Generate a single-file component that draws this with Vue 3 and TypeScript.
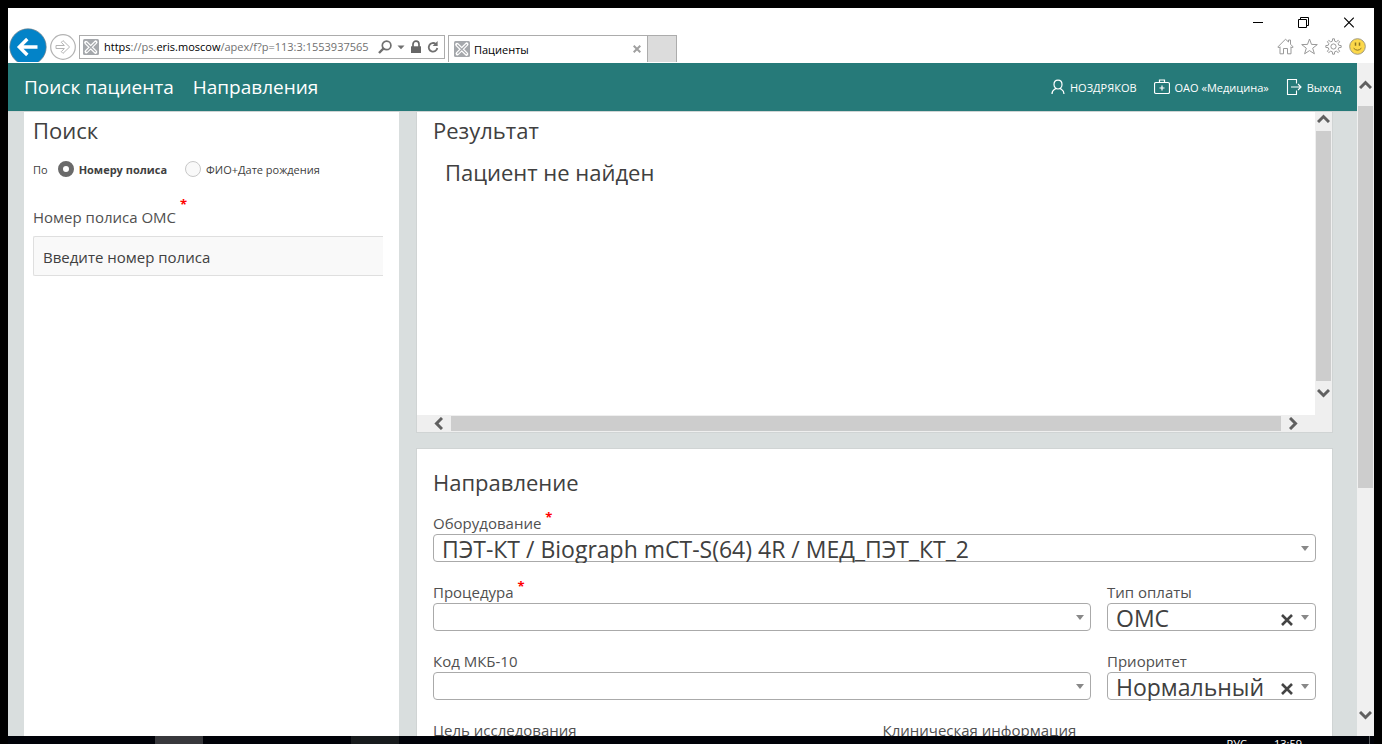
<script setup lang="ts">
import { ref } from 'vue'

type SearchMode = 'policy' | 'name'

const url = ref('https://ps.eris.moscow/apex/f?p=113:3:1553937565')
const mode = ref<SearchMode>('policy')
const policy = ref('')
const equipment = ref('ПЭТ-КТ / Biograph mCT-S(64) 4R / МЕД_ПЭТ_КТ_2')
const procedure = ref('')
const icd = ref('')
const payment = ref('ОМС')
const priority = ref('Нормальный')
</script>

<template>
  <div class="screen">
    <div class="window">
      <header class="chrome">
        <div class="nav-tools">
          <button class="back" type="button" aria-label="Назад">
            <svg width="38" height="38" viewBox="0 0 38 38">
              <circle cx="19" cy="19" r="18.2" fill="#0383c8" stroke="#6f7f8a" stroke-width=".7" />
              <path d="M28.5 19H11M18.3 11 L10.3 19l8 8" fill="none" stroke="#fff" stroke-width="3.4" />
            </svg>
          </button>
          <button class="forward" type="button" aria-label="Вперёд">
            <svg width="26" height="26" viewBox="0 0 26 26" fill="none" stroke="#b3b3b3">
              <circle cx="13" cy="13" r="12.3" stroke-width="1.2" />
              <path d="M6 11.5h8.3l-3-3.2 1.7-1.7 6.6 6.4-6.6 6.4-1.7-1.7 3-3.2H6z" />
            </svg>
          </button>
          <div class="address">
            <svg class="fav" width="16" height="16" viewBox="0 0 16 16">
              <rect width="16" height="16" rx="1.5" fill="#a5a8ac" />
              <path d="M3 3.6 12.5 13M12.7 3.2 3.4 12.6" stroke="#fff" stroke-width="3.6" stroke-linecap="round" />
              <path d="M3.4 4 12.2 12.6M12.4 3.6 3.8 12.2" stroke="#a5a8ac" stroke-width="1.3" stroke-linecap="round" />
            </svg>
            <label class="url">
              <span class="url-text" aria-hidden="true"><b>https</b>://ps.<b>eris.moscow</b>/apex/f?p=113:3:1553937565</span>
              <input v-model="url" type="text" aria-label="Адрес" />
            </label>
            <button type="button" aria-label="Поиск">
              <svg width="14" height="14" viewBox="0 0 14 14" fill="none" stroke="#707070"><circle cx="8.6" cy="5.4" r="4.3" stroke-width="1.7" /><path d="M5.6 8.4 1 13" stroke-width="2.4" /></svg>
            </button>
            <button type="button" aria-label="Показать адреса">
              <svg width="8" height="5" viewBox="0 0 8 5"><path d="M.5.5h7L4 4.3z" fill="#707070" /></svg>
            </button>
            <svg width="12" height="14" viewBox="0 0 12 14"><path d="M3 7V4.2a3 3 0 0 1 6 0V7" fill="none" stroke="#666" stroke-width="1.7" /><path d="M1 6.3h10V13H1z" fill="#666" /></svg>
            <button type="button" aria-label="Обновить">
              <svg width="12" height="14" viewBox="0 0 12 14"><path d="M8.8 4A4.3 4.3 0 1 0 10.300 8" fill="none" stroke="#707070" stroke-width="1.8" /><path d="M10.600 1v5H5.600z" fill="#707070" /></svg>
            </button>
          </div>
        </div>
        <div class="tabs">
          <div class="tab">
            <svg class="fav" width="16" height="16" viewBox="0 0 16 16">
              <rect width="16" height="16" rx="1.5" fill="#a5a8ac" />
              <path d="M3 3.6 12.5 13M12.7 3.2 3.4 12.6" stroke="#fff" stroke-width="3.6" stroke-linecap="round" />
              <path d="M3.4 4 12.2 12.6M12.4 3.6 3.8 12.2" stroke="#a5a8ac" stroke-width="1.3" stroke-linecap="round" />
            </svg>
            <span>Пациенты</span>
            <button type="button" aria-label="Закрыть вкладку">
              <svg width="8" height="8" viewBox="0 0 8 8"><path d="M.7.7l6.6 6.6M7.3.7.7 7.3" stroke="#a0a0a0" stroke-width="2" /></svg>
            </button>
          </div>
          <button class="new-tab" type="button" aria-label="Новая вкладка"></button>
        </div>
        <div class="window-tools">
          <div class="caption">
            <button type="button" aria-label="Свернуть">
              <svg width="10" height="11" viewBox="0 0 10 11"><path d="M0 5.5h10" stroke="#000" /></svg>
            </button>
            <button type="button" aria-label="Восстановить">
              <svg width="11" height="11" viewBox="0 0 11 11" fill="none" stroke="#000"><path d="M.5 2.5h8v8h-8zM2.5 2.5v-2h8v8h-2" /></svg>
            </button>
            <button type="button" aria-label="Закрыть">
              <svg width="10" height="11" viewBox="0 0 10 11"><path d="M.2.7l9.6 9.6M9.8.7.2 10.3" stroke="#000" stroke-width="1.1" /></svg>
            </button>
          </div>
          <div class="actions">
            <button type="button" aria-label="Домашняя страница">
              <svg width="17" height="17" viewBox="0 0 17 17" fill="none" stroke="#999"><path d="M.8 9 8.5 1.2 11.5 4V2h2v4.2L16.2 9l-1 1-1.2-1.2v7h-3.5V10.5h-4v5.3H3V8.8L1.8 10z" /></svg>
            </button>
            <button type="button" aria-label="Избранное">
              <svg width="17" height="17" viewBox="0 0 17 17" fill="none" stroke="#999"><path d="M8.5 1l2 5.4 5.8.2-4.6 3.6 1.7 5.6-4.9-3.2-4.9 3.2 1.7-5.6L.7 6.6l5.8-.2z" /></svg>
            </button>
            <button type="button" aria-label="Сервис">
              <svg width="17" height="17" viewBox="0 0 17 17" fill="none" stroke="#999"><circle cx="8.5" cy="8.5" r="2.6" /><path d="M7.3 3.2 7.6.8h1.8l.3 2.4 1.6.7 1.9-1.5 1.4 1.4-1.5 1.9.7 1.6 2.4.3v1.8l-2.4.3-.7 1.6 1.5 1.9-1.4 1.4-1.9-1.5-1.6.7-.3 2.4H7.6l-.3-2.4-1.6-.7-1.9 1.5-1.4-1.4 1.5-1.9-.7-1.6-2.4-.3V7.6l2.4-.3.7-1.6-1.5-1.9 1.4-1.4 1.9 1.5z" /></svg>
            </button>
            <button type="button" aria-label="Отправить отзыв">
              <svg width="17" height="17" viewBox="0 0 17 17"><circle cx="8.5" cy="8.5" r="7.8" fill="#fcd84a" stroke="#a09a80" /><path d="M6.5 4.4v3.4M10.5 4.4v3.4" stroke="#8b7420" stroke-width="1.5" /><path d="M4.6 10.2q3.9 4 7.8 0" fill="none" stroke="#8b7420" /></svg>
            </button>
          </div>
        </div>
      </header>

      <div class="viewport">
        <div class="page">
          <nav class="bar">
            <div class="menu">
              <a href="#search">Поиск пациента</a>
              <a href="#referrals">Направления</a>
            </div>
            <div class="account">
              <a href="#user">
                <svg width="14" height="16" viewBox="1 0 14 16" fill="none" stroke="#fff"><path d="M8 1.2c2.6 0 4 2 4 4.4S10.300 10 8 10 4 8 4 5.600 5.400 1.200 8 1.200zM5.800 9.500C4.300 10.800 2 11 2 15M10.200 9.500C11.700 10.800 14 11 14 15" stroke-width="1.200" /></svg>
                <span>НОЗДРЯКОВ</span>
              </a>
              <a href="#clinic">
                <svg width="16" height="16" viewBox="0 0 16 16" fill="none" stroke="#fff"><path d="M2 3.500h12a1.500 1.500 0 0 1 1.500 1.500v8a1.500 1.500 0 0 1-1.500 1.500H2A1.500 1.500 0 0 1 .5 13V5A1.500 1.500 0 0 1 2 3.500zM5.500 3.500V1h5v2.500M8 6.500v5M5.500 9h5" stroke-width="1.200" /></svg>
                <span>ОАО «Медицина»</span>
              </a>
              <a href="#exit">
                <svg width="16" height="16" viewBox="0 0 16 16" fill="none" stroke="#fff"><path d="M10.500 4.500v-4h-9v15h9v-4M5 8h10M12 5l3 3-3 3" stroke-width="1.100" /></svg>
                <span>Выход</span>
              </a>
            </div>
          </nav>

          <main class="content">
            <section class="panel search">
              <h2>Поиск</h2>
              <div class="modes" role="radiogroup" aria-label="По">
                <span>По</span>
                <label><input v-model="mode" type="radio" name="mode" value="policy" /><span>Номеру полиса</span></label>
                <label><input v-model="mode" type="radio" name="mode" value="name" /><span>ФИО+Дате рождения</span></label>
              </div>
              <label class="caption-text" for="policy">Номер полиса ОМС <i>*</i></label>
              <input id="policy" v-model="policy" class="policy" type="text" placeholder="Введите номер полиса" />
            </section>

            <div class="column">
              <section class="panel result">
                <div class="result-body">
                  <h2>Результат</h2>
                  <p>Пациент не найден</p>
                </div>
                <div class="vbar">
                  <svg width="13" height="9" viewBox="0 0 13 9"><path d="M1 8 6.500 2.500 12 8" fill="none" stroke="#606060" stroke-width="3" /></svg>
                  <div class="thumb"></div>
                  <svg width="13" height="9" viewBox="0 0 13 9"><path d="M1 1 6.500 6.500 12 1" fill="none" stroke="#606060" stroke-width="3" /></svg>
                </div>
                <div class="hbar">
                  <svg width="9" height="13" viewBox="0 0 9 13"><path d="M8 1 2.500 6.500 8 12" fill="none" stroke="#606060" stroke-width="3" /></svg>
                  <div class="thumb"></div>
                  <svg width="9" height="13" viewBox="0 0 9 13"><path d="M1 1 6.500 6.500 1 12" fill="none" stroke="#606060" stroke-width="3" /></svg>
                </div>
              </section>

              <form class="panel referral" @submit.prevent>
                <h2>Направление</h2>
                <div class="row">
                  <div class="field">
                    <label for="equipment">Оборудование <i>*</i></label>
                    <div class="select">
                      <select id="equipment" v-model="equipment"><option>ПЭТ-КТ / Biograph mCT-S(64) 4R / МЕД_ПЭТ_КТ_2</option></select>
                      <svg width="8" height="5" viewBox="0 0 8 5"><path d="M0 0h8L4 5z" fill="#888" /></svg>
                    </div>
                  </div>
                </div>
                <div class="row split">
                  <div class="field">
                    <label for="procedure">Процедура <i>*</i></label>
                    <div class="select">
                      <select id="procedure" v-model="procedure"><option value=""></option></select>
                      <svg width="8" height="5" viewBox="0 0 8 5"><path d="M0 0h8L4 5z" fill="#888" /></svg>
                    </div>
                  </div>
                  <div class="field">
                    <label for="payment">Тип оплаты</label>
                    <div class="select">
                      <select id="payment" v-model="payment"><option value=""></option><option>ОМС</option></select>
                      <button type="button" aria-label="Очистить тип оплаты" @click="payment = ''">
                        <svg width="12" height="12" viewBox="0 0 12 12"><path d="M1 1l10 10M11 1 1 11" stroke="#444" stroke-width="2.600" /></svg>
                      </button>
                      <svg width="8" height="5" viewBox="0 0 8 5"><path d="M0 0h8L4 5z" fill="#888" /></svg>
                    </div>
                  </div>
                </div>
                <div class="row split">
                  <div class="field">
                    <label for="icd">Код МКБ-10</label>
                    <div class="select">
                      <select id="icd" v-model="icd"><option value=""></option></select>
                      <svg width="8" height="5" viewBox="0 0 8 5"><path d="M0 0h8L4 5z" fill="#888" /></svg>
                    </div>
                  </div>
                  <div class="field">
                    <label for="priority">Приоритет</label>
                    <div class="select">
                      <select id="priority" v-model="priority"><option value=""></option><option>Нормальный</option></select>
                      <button type="button" aria-label="Очистить приоритет" @click="priority = ''">
                        <svg width="12" height="12" viewBox="0 0 12 12"><path d="M1 1l10 10M11 1 1 11" stroke="#444" stroke-width="2.600" /></svg>
                      </button>
                      <svg width="8" height="5" viewBox="0 0 8 5"><path d="M0 0h8L4 5z" fill="#888" /></svg>
                    </div>
                  </div>
                </div>
                <div class="row halves">
                  <div class="field"><label for="goal">Цель исследования</label><textarea id="goal"></textarea></div>
                  <div class="field"><label for="info">Клиническая информация</label><textarea id="info"></textarea></div>
                </div>
              </form>
            </div>
          </main>
        </div>
        <div class="page-scroll">
          <svg width="13" height="9" viewBox="0 0 13 9"><path d="M1 8 6.500 2.500 12 8" fill="none" stroke="#606060" stroke-width="3" /></svg>
          <div class="track"><div class="thumb"></div></div>
          <svg width="13" height="9" viewBox="0 0 13 9"><path d="M1 1 6.500 6.500 12 1" fill="none" stroke="#606060" stroke-width="3" /></svg>
        </div>
      </div>
    </div>
    <footer class="taskbar">
      <button class="app active" type="button" aria-label="Браузер"></button>
      <button class="app" type="button" aria-label="Приложение"></button>
      <div class="tray"><span>РУС</span><time>13:59</time></div>
      <button class="desktop" type="button" aria-label="Свернуть все окна"></button>
    </footer>
  </div>
</template>

<style>
html,
body {
  margin: 0;
  background: #000;
}
</style>

<style scoped>
* {
  box-sizing: border-box;
}
.screen {
  display: flex;
  flex-direction: column;
  height: 100vh;
  padding: 8px 8px 0;
  overflow: hidden;
  background: #000;
  color: #404040;
  font-family: 'Open Sans', 'Noto Sans', sans-serif;
}
button {
  display: block;
  padding: 0;
  border: 0;
  background: none;
}
svg {
  display: block;
  flex: none;
}
.window {
  display: flex;
  flex: 1;
  flex-direction: column;
  min-height: 0;
  background: #fff;
}

/* Browser chrome */
.chrome {
  display: flex;
  flex: none;
  height: 54px;
  margin-bottom: 1px;
  overflow: hidden;
}
.nav-tools {
  display: flex;
  align-items: flex-start;
  padding-top: 20px;
}
.back {
  margin-left: 1px;
}
.forward {
  margin: 6px 3px 0 3px;
}
.address {
  display: flex;
  align-items: center;
  gap: 5px;
  width: 366px;
  height: 24px;
  margin-top: 7px;
  padding: 0 5px 0 3px;
  border: 1px solid #acacac;
}
.url {
  display: grid;
  flex: 1;
  min-width: 0;
  align-items: center;
  font-size: 11px;
  line-height: 20px;
}
.url > * {
  grid-area: 1 / 1;
  min-width: 0;
}
.url-text {
  color: #707070;
  white-space: nowrap;
}
.url-text b {
  color: #000;
  font-weight: 400;
}
.url input {
  width: 100%;
  padding: 0;
  border: 0;
  outline: 0;
  background: none;
  color: transparent;
  font: inherit;
}
.tabs {
  display: flex;
  align-items: flex-end;
  height: 54px;
  margin-left: 3px;
}
.tab {
  display: flex;
  align-items: center;
  gap: 4px;
  width: 200px;
  height: 27px;
  padding: 0 6px 0 5px;
  border: 1px solid #acacac;
  border-bottom: 0;
  color: #000;
  font-size: 11px;
}
.tab span {
  flex: 1;
}
.new-tab {
  width: 29px;
  height: 27px;
  border: 1px solid #acacac;
  border-width: 1px 1px 0 0;
  background: #dcdcdc;
}
.window-tools {
  display: flex;
  flex-direction: column;
  align-items: flex-end;
  margin-left: auto;
}
.caption {
  display: flex;
  gap: 35px;
  padding: 9px 20px 0 0;
}
.actions {
  display: flex;
  gap: 7px;
  padding: 10px 8px 0 0;
}

/* Page */
.viewport {
  display: flex;
  flex: 1;
  min-height: 0;
}
.page {
  display: flex;
  flex: 1;
  flex-direction: column;
  min-width: 0;
  overflow: hidden;
  background: #d9dede;
}
.bar {
  display: flex;
  flex: none;
  align-items: center;
  justify-content: space-between;
  height: 48px;
  padding: 0 16px;
  background: #267a79;
}
.bar a {
  color: #fff;
  text-decoration: none;
}
.menu {
  display: flex;
  gap: 19px;
  font-size: 19px;
}
.account {
  display: flex;
  gap: 17px;
  font-size: 11px;
}
.account a {
  display: flex;
  align-items: center;
  gap: 5px;
}
.content {
  display: grid;
  flex: 1;
  grid-template-columns: 375px minmax(0, 1fr);
  gap: 17px;
  min-height: 0;
  padding: 0 24px 0 16px;
  border-top: 1px solid #cfd4d4;
}
.panel {
  background: #fff;
}
h2 {
  margin: 0;
  font-size: 22px;
  font-weight: 400;
  line-height: 36px;
}
i {
  color: #f00;
  font-size: 13px;
  font-style: normal;
  font-weight: 700;
  line-height: 12px;
}
.search {
  display: flex;
  flex-direction: column;
  padding: 0 16px 0 9px;
}
.modes {
  display: flex;
  align-items: center;
  height: 20px;
  margin-top: 11px;
  font-size: 11px;
}
.modes label {
  display: flex;
  align-items: center;
  gap: 5px;
  margin-left: 10px;
}
.modes label + label {
  margin-left: 18px;
}
.modes input {
  width: 16px;
  height: 16px;
  margin: 0;
  border: 1px solid #c8c8c8;
  border-radius: 50%;
  appearance: none;
  background: #f9f9f9;
}
.modes input:checked {
  border: 5px solid #6a6a6a;
  background: #fff;
}
.modes input:checked + span {
  font-weight: 700;
}
.caption-text,
.field label {
  color: #505050;
  font-size: 15px;
  line-height: 20px;
}
.caption-text {
  margin-top: 28px;
}
.caption-text i {
  position: relative;
  top: -14px;
}
.policy {
  height: 40px;
  margin-top: 9px;
  padding: 2px 9px 0;
  border: 1px solid #dfdfdf;
  border-right: 0;
  border-radius: 2px 0 0 2px;
  outline: 0;
  background: #f9f9f9;
  color: #404040;
  font: 15px 'Open Sans', 'Noto Sans', sans-serif;
}
.policy::placeholder {
  color: #404040;
  opacity: 1;
}
.column {
  display: flex;
  flex-direction: column;
  gap: 15px;
  min-width: 0;
}
.result {
  display: grid;
  flex: none;
  grid-template-rows: 303px 17px;
  grid-template-columns: minmax(0, 1fr) 17px;
  border: 1px solid #d0d4d4;
  border-top: 0;
  background: #efefef;
}
.result-body {
  padding: 0 16px;
  background: #fff;
}
.result p {
  margin: 6px 0 0 12px;
  font-size: 22px;
  line-height: 36px;
}
.vbar {
  display: flex;
  flex-direction: column;
  align-items: center;
  gap: 8px;
  padding: 2px 0 17px;
}
.vbar .thumb {
  flex: 1;
  width: 15px;
}
.thumb {
  background: #cdcdcd;
}
.hbar {
  display: flex;
  align-items: center;
  gap: 8px;
  padding: 0 17px;
}
.hbar .thumb {
  flex: 1;
  height: 15px;
}
.referral {
  flex: none;
  padding: 15px 16px;
  border: 1px solid #d0d4d4;
}
.row {
  display: grid;
  gap: 16px;
  margin-bottom: 20px;
}
.referral h2 {
  margin-bottom: 13px;
}
.split {
  grid-template-columns: minmax(0, 1fr) 209px;
}
.halves {
  grid-template-columns: 1fr 1fr;
}
.field {
  display: flex;
  flex-direction: column;
  gap: 1px;
}
.field label i {
  position: relative;
  top: -7px;
}
.select {
  display: flex;
  align-items: center;
  height: 28px;
  padding-right: 6px;
  border: 1px solid #aaa;
  border-radius: 4px;
}
.select select {
  flex: 1;
  min-width: 0;
  height: 30px;
  padding: 0 0 0 8px;
  border: 0;
  outline: 0;
  appearance: none;
  background: none;
  color: #404040;
  font: 23px 'Open Sans', 'Noto Sans', sans-serif;
}
.select button {
  margin: 6px 8px 0 0;
}
textarea {
  height: 60px;
  border: 1px solid #aaa;
}
.page-scroll {
  display: flex;
  flex-direction: column;
  align-items: center;
  width: 17px;
  padding: 17px 0 16px;
  background: #f0f0f0;
}
.track {
  flex: 1;
  width: 15px;
  margin: 17px 0;
}
.track .thumb {
  height: 65%;
}
.taskbar {
  display: flex;
  flex: none;
  height: 8px;
  overflow: hidden;
  background: #000208;
}
.app {
  width: 48px;
  height: 8px;
  margin-left: 147px;
  background: #181b1d;
}
.app.active {
  background: #38383c;
}
.app + .app {
  margin-left: 148px;
}
.tray {
  display: flex;
  gap: 27px;
  margin-left: auto;
  padding-right: 67px;
  color: #fff;
  font-size: 11px;
}
.desktop {
  width: 5px;
  height: 8px;
  border-left: 1px solid #55585c;
}
</style>
